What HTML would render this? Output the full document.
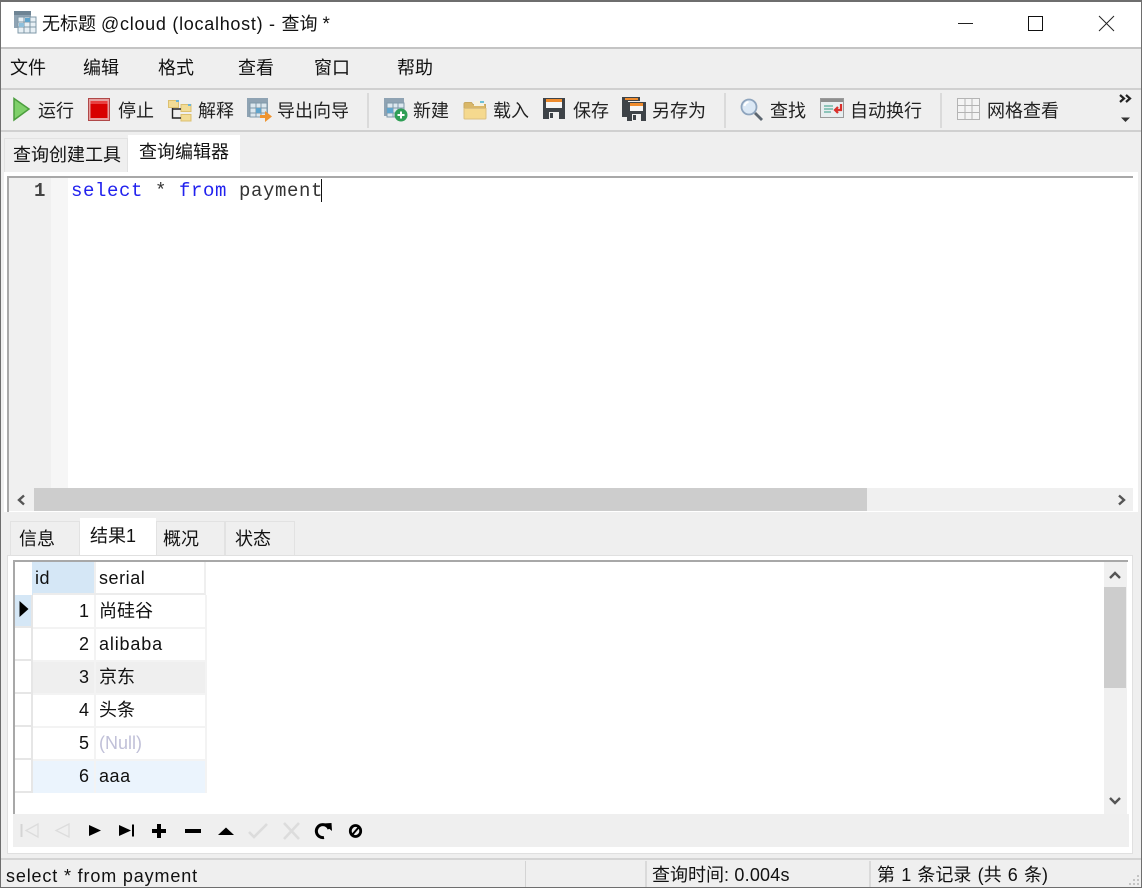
<!DOCTYPE html>
<html><head><meta charset="utf-8"><style>
html,body{margin:0;padding:0}
body{width:1142px;height:888px;overflow:hidden;position:relative;background:#efefef;font-family:"Liberation Sans","Noto Sans CJK SC",sans-serif;color:#111}
.a{position:absolute}
.t{position:absolute;font-size:18px;line-height:24px;white-space:nowrap}
.tb{color:#222}
.l{letter-spacing:.55px}
svg{position:absolute;overflow:visible}
</style></head><body>
<div class="a" style="left:0;top:0;width:1142px;height:888px;box-sizing:border-box;border:1px solid #6e6e6e;border-top:2px solid #6e6e6e;z-index:50;pointer-events:none"></div>
<div class="a" style="left:0;top:0;width:1142px;height:47px;background:#fff"></div>
<div class="a" style="left:0;top:47px;width:1142px;height:2px;background:#c4c4c4"></div>
<svg style="left:13px;top:11px" width="24" height="23"><rect x="1" y="0" width="17" height="17" fill="#8fa3b3"/><rect x="1" y="0" width="17" height="4" fill="#6e8494"/><rect x="5" y="6" width="18" height="16" fill="#e8f0f5" stroke="#7f98a8"/><path d="M5 11h18M5 16h18M11 6v16M17 6v16" stroke="#7f98a8"/><rect x="12" y="7" width="5" height="4" fill="#5fa4cc"/><rect x="6" y="12" width="5" height="4" fill="#8ec0dc"/></svg>
<div class="t" style="left:42px;top:12px;color:#111">无标题 <span style="letter-spacing:.72px">@cloud (localhost) - </span>查询 <span style="font-size:19px">*</span></div>
<svg style="left:958px;top:15px" width="170" height="18"><path d="M0 8.500h15" stroke="#222" fill="none"/><rect x="70.500" y="1.500" width="14" height="14" stroke="#111" fill="none"/><path d="M141 1l15 15M156 1l-15 15" stroke="#222" fill="none"/></svg>

<div class="t" style="left:10px;top:56px">文件</div>
<div class="t" style="left:83px;top:56px">编辑</div>
<div class="t" style="left:158px;top:56px">格式</div>
<div class="t" style="left:238px;top:56px">查看</div>
<div class="t" style="left:314px;top:56px">窗口</div>
<div class="t" style="left:397px;top:56px">帮助</div>
<div class="a" style="left:0;top:88px;width:1142px;height:2px;background:#d0d0d0"></div>

<svg style="left:13px;top:97px" width="18" height="24"><path d="M1 1.500L16 12 1 23z" fill="#7fd06a" stroke="#4c9e3e" stroke-width="1.500"/></svg>
<div class="t tb" style="left:38px;top:99px">运行</div>
<svg style="left:88px;top:98px" width="23" height="23"><rect x=".5" y=".5" width="21" height="22" fill="#e6a0a0" stroke="#b04848"/><rect x="2.500" y="3" width="17" height="17" fill="#d80000"/><rect x="2.500" y="3" width="17" height="3" fill="#e84040"/></svg>
<div class="t tb" style="left:118px;top:99px">停止</div>
<svg style="left:168px;top:100px" width="24" height="22"><rect x=".5" y=".5" width="10" height="7" fill="#f2dc96" stroke="#dcc070"/><rect x="13" y="4.500" width="10" height="7" fill="#f2dc96" stroke="#dcc070"/><rect x="13" y="14.500" width="10" height="6.500" fill="#f2dc96" stroke="#dcc070"/><path d="M4.500 8v10H13M4.500 9H13" stroke="#222" stroke-width="1.400" fill="none"/><rect x="8" y="0" width="3" height="2" fill="#6cb4d8"/><rect x="20" y="4" width="3" height="2" fill="#6cb4d8"/></svg>
<div class="t tb" style="left:198px;top:99px">解释</div>
<svg style="left:247px;top:98px" width="26" height="24"><rect x="0" y="0" width="21" height="19" fill="#8fa3b3"/><rect x="3" y="5" width="17" height="14" fill="#dce8ef" stroke="#7f98a8"/><path d="M3 10h17M3 15h17M9 5v14M14 5v14" stroke="#7f98a8"/><rect x="9" y="10" width="5" height="5" fill="#5fa4cc"/><path d="M13 17h5v-4l7 5.500-7 5.500v-4h-5z" fill="#ef9430"/></svg>
<div class="t tb" style="left:277px;top:99px">导出向导</div>
<div class="a" style="left:367px;top:93px;width:2px;height:35px;background:#dadada"></div>

<svg style="left:384px;top:98px" width="24" height="24"><rect x="0" y="0" width="20" height="18" fill="#8fa3b3"/><rect x="3" y="5" width="17" height="14" fill="#dce8ef" stroke="#7f98a8"/><path d="M3 10h17M3 15h17M9 5v14M14 5v14" stroke="#7f98a8"/><rect x="3" y="10" width="6" height="5" fill="#5fa4cc"/><circle cx="17" cy="17" r="6.500" fill="#2f9e55"/><path d="M13.500 17h7M17 13.500v7" stroke="#fff" stroke-width="2"/></svg>
<div class="t tb" style="left:413px;top:99px">新建</div>
<svg style="left:463px;top:100px" width="24" height="20"><path d="M1 4q0-1.500 1.500-1.500h6L10 4.500h12.500V18H1z" fill="#d9b768" stroke="#c8a860"/><path d="M11 1h10v5H11z" fill="#f6f2e0"/><path d="M17 1h4v2h-4z" fill="#6cc0d8"/><path d="M1 8.500h22V18q0 1-1 1H2q-1 0-1-1z" fill="#f5d98e" stroke="#dcc080"/></svg>
<div class="t tb" style="left:493px;top:99px">载入</div>
<svg style="left:543px;top:98px" width="23" height="22"><rect x="0" y="0" width="22" height="21" fill="#3e4348"/><rect x="3" y="1" width="16" height="3" fill="#ef8c2e"/><rect x="3" y="4" width="16" height="6" fill="#f6f6f6"/><rect x="6" y="14" width="10" height="7" fill="#f0f0f0"/><rect x="7" y="15" width="3" height="5" fill="#3e4348"/></svg>
<div class="t tb" style="left:573px;top:99px">保存</div>
<svg style="left:622px;top:97px" width="24" height="24"><path d="M0 0h18v4H6v16H0z" fill="#3e4348"/><rect x="3" y="1" width="13" height="2" fill="#ef8c2e"/><rect x="5" y="5" width="19" height="19" fill="#3e4348"/><rect x="8" y="6" width="13" height="3" fill="#ef8c2e"/><rect x="8" y="9" width="13" height="5" fill="#f6f6f6"/><rect x="10" y="17" width="9" height="7" fill="#f0f0f0"/><rect x="11" y="18" width="3" height="5" fill="#3e4348"/></svg>
<div class="t tb" style="left:652px;top:99px">另存为</div>
<div class="a" style="left:724px;top:93px;width:2px;height:35px;background:#dadada"></div>

<svg style="left:740px;top:98px" width="24" height="24"><circle cx="9" cy="9" r="7.500" fill="#dbe8f5" stroke="#8ea4bd" stroke-width="1.800"/><path d="M4.500 8a5 5 0 0 1 4-4" stroke="#fff" stroke-width="2" fill="none"/><path d="M15 15l7 7" stroke="#5c6670" stroke-width="2.800"/></svg>
<div class="t tb" style="left:770px;top:99px">查找</div>
<svg style="left:820px;top:98px" width="25" height="21"><rect x=".5" y=".5" width="23" height="19" fill="#e8eef0" stroke="#9a9a9a"/><rect x="1" y="1" width="22" height="3" fill="#8e8e8e"/><path d="M4 8h9M4 11h9M4 14h7" stroke="#6fb7a8" stroke-width="1.500"/><path d="M21 6v6h-6M18 9l-3 3 3 3" stroke="#d8302c" stroke-width="2.200" fill="none"/></svg>
<div class="t tb" style="left:850px;top:99px">自动换行</div>
<div class="a" style="left:940px;top:93px;width:2px;height:35px;background:#dadada"></div>

<svg style="left:957px;top:98px" width="24" height="23"><rect x=".5" y=".5" width="22" height="21" fill="#f4f4f4" stroke="#b4b4b4"/><path d="M.5 7.500h22M.5 14.500h22M8 .5v21M15 .5v21" stroke="#b4b4b4"/></svg>
<div class="t tb" style="left:987px;top:99px">网格查看</div>
<svg style="left:1119px;top:93px" width="14" height="32"><path d="M1 2l4 3.500-4 3.500M7 2l4 3.500-4 3.500" stroke="#222" stroke-width="2.200" fill="none"/><path d="M2 24.500h9l-4.500 4.500z" fill="#333"/></svg>
<div class="a" style="left:0;top:130px;width:1142px;height:2px;background:#d0d0d0"></div>

<!-- top tabs -->
<div class="a" style="left:4px;top:138px;width:124px;height:34px;background:#efefef;border:1px solid #e2e2e2;border-bottom:0;box-sizing:border-box"></div>
<div class="t" style="left:13px;top:143px">查询创建工具</div>
<div class="a" style="left:128px;top:135px;width:112px;height:37px;background:#fff"></div>
<div class="t" style="left:139px;top:140px">查询编辑器</div>
<div class="a" style="left:4px;top:172px;width:1134px;height:340px;background:#fff"></div>
<div class="a" style="left:7px;top:176px;width:1126px;height:2px;background:#a8a8a8"></div>
<div class="a" style="left:7px;top:176px;width:2px;height:336px;background:#a8a8a8"></div>
<div class="a" style="left:9px;top:178px;width:42px;height:310px;background:#f0f0f0"></div>
<div class="a" style="left:51px;top:178px;width:17px;height:310px;background:#f6f6f6"></div>
<div class="a" style="left:34px;top:179px;font:bold 19px/24px 'Liberation Mono',monospace;color:#444">1</div>
<div class="a" style="left:71px;top:179px;font:19px/24px 'Liberation Mono',monospace;letter-spacing:.6px;white-space:pre;color:#333"><span style="color:#2222ee">select</span> * <span style="color:#2222ee">from</span> payment</div>
<div class="a" style="left:321px;top:179px;width:1px;height:23px;background:#111"></div>

<div class="a" style="left:9px;top:488px;width:1124px;height:23px;background:#f0f0f0"></div>
<div class="a" style="left:34px;top:488px;width:833px;height:23px;background:#cdcdcd"></div>
<svg style="left:16px;top:494px" width="10" height="12"><path d="M8 1.500L3 6l5 4.500" stroke="#555" stroke-width="2.400" fill="none"/></svg>
<svg style="left:1117px;top:494px" width="10" height="12"><path d="M2 1.500L7 6l-5 4.500" stroke="#555" stroke-width="2.400" fill="none"/></svg>

<!-- bottom tabs -->
<div class="a" style="left:10px;top:521px;width:70px;height:34px;background:#efefef;border:1px solid #e2e2e2;border-bottom:0;box-sizing:border-box"></div>
<div class="t" style="left:19px;top:527px">信息</div>
<div class="a" style="left:80px;top:518px;width:76px;height:37px;background:#fff"></div>
<div class="t" style="left:90px;top:524px">结果<span class="l">1</span></div>
<div class="a" style="left:156px;top:521px;width:69px;height:34px;background:#efefef;border:1px solid #e2e2e2;border-bottom:0;box-sizing:border-box"></div>
<div class="t" style="left:163px;top:527px">概况</div>
<div class="a" style="left:225px;top:521px;width:70px;height:34px;background:#efefef;border:1px solid #e2e2e2;border-bottom:0;box-sizing:border-box"></div>
<div class="t" style="left:235px;top:527px">状态</div>

<div class="a" style="left:7px;top:555px;width:1126px;height:299px;background:#fff;box-sizing:border-box;border:1px solid #e0e0e0"></div>
<div class="a" style="left:13px;top:560px;width:1115px;height:2px;background:#a8a8a8"></div>
<div class="a" style="left:13px;top:560px;width:2px;height:254px;background:#a8a8a8"></div>

<!-- grid -->
<div class="a" style="left:32px;top:562px;width:64px;height:33px;background:#d5e7f6;border-right:2px solid #efefef;box-sizing:border-box"></div>
<div class="a" style="left:15px;top:595px;width:17px;height:33px;background:#d5e7f6;border-bottom:2px solid #e8e8e8;box-sizing:border-box"></div>
<div class="a" style="left:15px;top:628px;width:17px;height:165px;background:repeating-linear-gradient(#fff 0,#fff 31px,#e6e6e6 31px,#e6e6e6 33px)"></div>
<div class="a" style="left:31px;top:595px;width:2px;height:198px;background:#e6e6e6"></div>
<div class="a" style="left:33px;top:562px;width:173px;height:33px;border-right:2px solid #efefef;border-bottom:2px solid #ececec;box-sizing:border-box"></div>
<svg style="left:19px;top:600px" width="10" height="18"><path d="M0.500 1l9 8-9 8z" fill="#000"/></svg>
<div class="t l" style="left:35px;top:566px">id</div>
<div class="t l" style="left:99px;top:566px">serial</div>

<div class="a" style="left:33px;top:661px;width:173px;height:33px;background:#efefef"></div>
<div class="a" style="left:33px;top:760px;width:173px;height:33px;background:#ebf4fd"></div>
<div class="a" style="left:33px;top:627px;width:173px;height:2px;background:#f3f3f3"></div>
<div class="a" style="left:33px;top:660px;width:173px;height:2px;background:#f3f3f3"></div>
<div class="a" style="left:33px;top:693px;width:173px;height:2px;background:#f3f3f3"></div>
<div class="a" style="left:33px;top:726px;width:173px;height:2px;background:#f3f3f3"></div>
<div class="a" style="left:33px;top:759px;width:173px;height:2px;background:#f3f3f3"></div>
<div class="a" style="left:94px;top:595px;width:2px;height:198px;background:#f3f3f3"></div>
<div class="a" style="left:205px;top:595px;width:2px;height:198px;background:#f3f3f3"></div>

<div class="t" style="left:79px;top:599px">1</div><div class="t" style="left:99px;top:599px">尚硅谷</div>
<div class="t" style="left:79px;top:632px">2</div><div class="t" style="left:99px;top:632px;letter-spacing:.85px">alibaba</div>
<div class="t" style="left:79px;top:665px">3</div><div class="t" style="left:99px;top:665px">京东</div>
<div class="t" style="left:79px;top:698px">4</div><div class="t" style="left:99px;top:698px">头条</div>
<div class="t" style="left:79px;top:731px">5</div><div class="t" style="left:99px;top:731px;color:#c0c0d8">(Null)</div>
<div class="t" style="left:79px;top:764px">6</div><div class="t l" style="left:99px;top:764px">aaa</div>

<!-- v scrollbar -->
<div class="a" style="left:1104px;top:562px;width:23px;height:252px;background:#f0f0f0"></div>
<div class="a" style="left:1104px;top:587px;width:22px;height:101px;background:#cdcdcd"></div>
<svg style="left:1109px;top:570px" width="12" height="10"><path d="M1 8l5-5 5 5" stroke="#555" stroke-width="2.400" fill="none"/></svg>
<svg style="left:1109px;top:796px" width="12" height="10"><path d="M1 2l5 5 5-5" stroke="#555" stroke-width="2.400" fill="none"/></svg>

<!-- nav bar -->
<div class="a" style="left:13px;top:814px;width:1116px;height:33px;background:#efefef"></div>
<svg style="left:18px;top:820px" width="350" height="22">
<path d="M3 4v13M4 4v13" stroke="#d4d4d4"/><path d="M20 4L8 10.500 20 17z" fill="none" stroke="#dcdcdc" stroke-width="1.300"/>
<path d="M51 4L38 10.500 51 17z" fill="none" stroke="#dcdcdc" stroke-width="1.300"/>
<path d="M71 5v11l12-5.500z" fill="#000"/>
<path d="M101 5v11l12-5.500z" fill="#000"/><path d="M115 4.500v12" stroke="#000" stroke-width="2"/>
<path d="M134 9h14v4h-14zM139 4h4v14h-4z" fill="#000"/>
<path d="M167 9h16v4h-16z" fill="#000"/>
<path d="M200 15l8-7.500 8 7.500z" fill="#000"/>
<path d="M231 12l5 5 13-13" fill="none" stroke="#dcdcdc" stroke-width="2.600"/>
<path d="M266 3l15 16M281 3l-15 16" stroke="#dcdcdc" stroke-width="2.600"/>
<path d="M311 9a6.500 6.500 0 1 0-5 8.500" fill="none" stroke="#000" stroke-width="3"/><path d="M305 3.500l8.500-.5.500 8z" fill="#000"/>
<ellipse cx="337.500" cy="11" rx="5.200" ry="5.500" fill="none" stroke="#000" stroke-width="2.800"/><path d="M334 15l7-8" stroke="#000" stroke-width="2"/>
</svg>

<!-- status bar -->
<div class="a" style="left:0;top:858px;width:1142px;height:2px;background:#d4d4d4"></div>
<div class="a" style="left:525px;top:861px;width:1px;height:26px;background:#d4d4d4"></div>
<div class="a" style="left:645px;top:861px;width:2px;height:26px;background:#dadada"></div>
<div class="a" style="left:869px;top:861px;width:2px;height:26px;background:#dadada"></div>
<div class="t" style="left:6px;top:864px;letter-spacing:.85px">select * from payment</div>
<div class="t" style="left:652px;top:863px">查询时间<span style="letter-spacing:.2px">: 0.004s</span></div>
<div class="t" style="left:877px;top:863px;word-spacing:1.200px">第 1 条记录 (共 6 条)</div>
<svg style="left:1128px;top:874px" width="12" height="12"><path d="M9 1h2v2H9zM5 5h2v2H5zM9 5h2v2H9zM1 9h2v2H1zM5 9h2v2H5zM9 9h2v2H9z" fill="#c4c4c4"/></svg>
</body></html>
